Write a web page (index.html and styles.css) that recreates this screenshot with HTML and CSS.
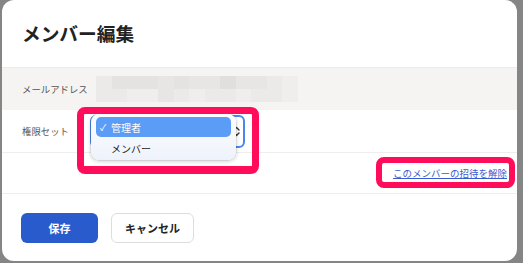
FILE: index.html
```html
<!DOCTYPE html>
<html lang="ja">
<head>
<meta charset="utf-8">
<link rel="stylesheet" href="styles.css">
</head>
<body>
<div class="modal">
  <div class="header"><h1 class="title">メンバー編集</h1></div>
  <div class="row row-email">
    <div class="label">メールアドレス</div>
    <div class="blur">
      <i class="s1"></i><i class="s3"></i><i class="s3"></i><i class="s3"></i><i class="s2"></i><i class="s3"></i><i class="s2"></i><i class="s2"></i><i class="s4"></i><i class="s2"></i><i class="s2"></i><i class="s1"></i><i class="s0"></i>
      <i class="s1"></i><i class="s1"></i><i class="s0"></i><i class="s0"></i><i class="s2"></i><i class="s1"></i><i class="s0"></i><i class="s1"></i><i class="s1"></i><i class="s0"></i><i class="s1"></i><i class="s1"></i><i class="s0"></i>
    </div>
  </div>
  <div class="row row-role">
    <div class="label">権限セット</div>
    <div class="select">
      <svg class="arrows" width="7" height="11" viewBox="0 0 7 11"><path d="M1 4 L3.5 1.5 L6 4 M1 7 L3.5 9.5 L6 7" fill="none" stroke="#333" stroke-width="1.4" stroke-linecap="round" stroke-linejoin="round"/></svg>
    </div>
  </div>
  <div class="row row-link">
    <a class="link" href="#">このメンバーの招待を解除</a>
  </div>
  <div class="footer">
    <button class="btn btn-primary">保存</button>
    <button class="btn btn-default">キャンセル</button>
  </div>

  <div class="popup">
    <div class="opt opt-active"><span class="check">✓</span>管理者</div>
    <div class="opt">メンバー</div>
  </div>
  <div class="mark mark-select"></div>
  <div class="mark mark-link"></div>
</div>
</body>
</html>
```
FILE: styles.css
```css
* { box-sizing: border-box; }
html, body { margin: 0; padding: 0; }
body {
  width: 523px;
  height: 263px;
  background: #858585;
  font-family: "Noto Sans CJK JP", "Noto Sans", sans-serif;
  overflow: hidden;
}
.modal {
  position: relative;
  margin-left: 2px;
  width: 515px;
  height: 261px;
  background: #fff;
  border-radius: 12px;
  overflow: hidden;
}
.header {
  height: 67px;
  display: flex;
  align-items: center;
  padding-left: 20px;
}
.title {
  margin: 0;
  font-size: 18.7px;
  font-weight: 700;
  color: #222;
  line-height: 1;
  letter-spacing: 0;
}
.row {
  display: flex;
  align-items: center;
  padding-left: 20px;
  border-bottom: 1px solid #eeeeee;
}
.label {
  font-size: 9.4px;
  color: #555;
  width: 74px;
  flex: none;
}
.row-email {
  height: 43px;
  background: #f5f4f2;
  border-top: 1px solid #ebebeb;
  border-bottom: none;
}
.blur {
  display: grid;
  grid-template-columns: repeat(13, 15.5px);
  grid-auto-rows: 13px;
  margin-top: 0;
}
.blur i { display: block; }
.s0 { background: #efeeec; }
.s1 { background: #ebeae8; }
.s2 { background: #e7e6e4; }
.s3 { background: #e4e3e1; }
.s4 { background: #e0dfdd; }
.row-role {
  height: 43px;
}
.select {
  width: 155px;
  height: 33px;
  margin-left: -6px;
  border: 2px solid #4a86f0;
  border-radius: 6px;
  display: flex;
  align-items: center;
  justify-content: flex-end;
  padding-right: 3px;
}
.row-link {
  height: 41px;
  justify-content: flex-end;
  padding-right: 10px;
}
.link {
  font-size: 9.5px;
  color: #3b5bd0;
  text-decoration: underline;
}
.footer {
  display: flex;
  gap: 13px;
  padding: 19px 0 0 19px;
}
.btn {
  height: 30px;
  border-radius: 6px;
  font-family: inherit;
  font-size: 11px;
  font-weight: 700;
  padding: 0;
}
.btn-primary {
  width: 77px;
  background: #2a5bcc;
  color: #fff;
  border: none;
}
.btn-default {
  width: 83px;
  background: #fff;
  color: #222;
  border: 1px solid #dddddd;
}
.popup {
  position: absolute;
  left: 89px;
  top: 114px;
  width: 145px;
  height: 46px;
  border-radius: 8px;
  background: linear-gradient(#fdfdfe, #eef3fb);
  box-shadow: 0 1px 4px rgba(0,0,0,0.22), 0 0 0 0.5px rgba(0,0,0,0.12);
  padding: 3px 5px;
}
.opt {
  height: 20px;
  display: flex;
  align-items: center;
  padding-left: 15px;
  font-size: 10px;
  color: #222;
  position: relative;
  margin-bottom: 1px;
}
.opt + .opt { height: 21px; }
.opt-active {
  background: #5b9cf6;
  color: #fff;
  border-radius: 5px;
}
.check {
  position: absolute;
  left: 4px;
  font-size: 9px;
}
.mark {
  position: absolute;
  border: 7px solid #ff0d5b;
  border-radius: 8px;
}
.mark-select {
  left: 75px;
  top: 107px;
  width: 182px;
  height: 67px;
  border-bottom-width: 8px;
}
.mark-link {
  left: 374px;
  top: 157px;
  width: 139px;
  height: 31px;
  border-width: 6px;
}
```
